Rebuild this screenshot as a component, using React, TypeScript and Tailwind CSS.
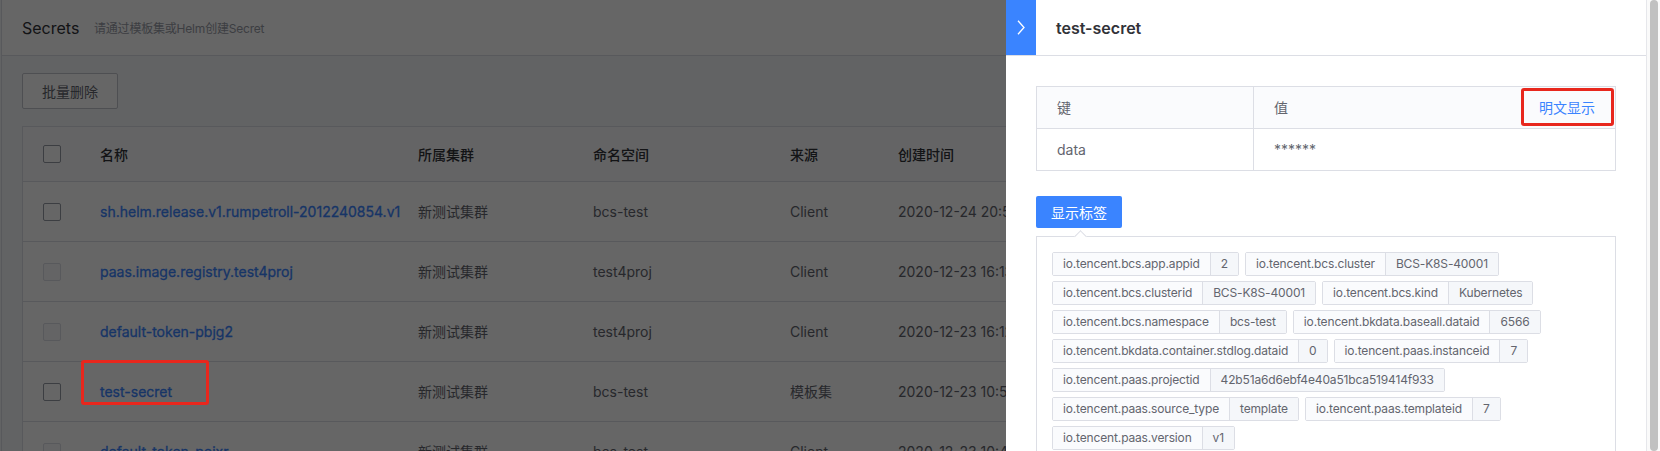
import React from "react";

type Row = {
  name: string;
  cluster: string;
  ns: string;
  src: string;
  time: string;
  disabled: boolean;
  mark?: boolean;
};

const rows: Row[] = [
  { name: "sh.helm.release.v1.rumpetroll-2012240854.v1", cluster: "新测试集群", ns: "bcs-test", src: "Client", time: "2020-12-24 20:54:18", disabled: false },
  { name: "paas.image.registry.test4proj", cluster: "新测试集群", ns: "test4proj", src: "Client", time: "2020-12-23 16:13:02", disabled: true },
  { name: "default-token-pbjg2", cluster: "新测试集群", ns: "test4proj", src: "Client", time: "2020-12-23 16:12:51", disabled: true },
  { name: "test-secret", cluster: "新测试集群", ns: "bcs-test", src: "模板集", time: "2020-12-23 10:55:37", disabled: false, mark: true },
  { name: "default-token-pojxr", cluster: "新测试集群", ns: "bcs-test", src: "Client", time: "2020-12-23 10:46:09", disabled: true },
];

const tagRows: [string, string][][] = [
  [["io.tencent.bcs.app.appid", "2"], ["io.tencent.bcs.cluster", "BCS-K8S-40001"]],
  [["io.tencent.bcs.clusterid", "BCS-K8S-40001"], ["io.tencent.bcs.kind", "Kubernetes"]],
  [["io.tencent.bcs.namespace", "bcs-test"], ["io.tencent.bkdata.baseall.dataid", "6566"]],
  [["io.tencent.bkdata.container.stdlog.dataid", "0"], ["io.tencent.paas.instanceid", "7"]],
  [["io.tencent.paas.projectid", "42b51a6d6ebf4e40a51bca519414f933"]],
  [["io.tencent.paas.source_type", "template"], ["io.tencent.paas.templateid", "7"]],
  [["io.tencent.paas.version", "v1"]],
];

function Checkbox({ disabled }: { disabled?: boolean }) {
  return (
    <span
      className={
        disabled
          ? "block w-[18px] h-[18px] rounded-[2px] border border-[#dcdee5] bg-[#fafbfd]"
          : "block w-[18px] h-[18px] rounded-[2px] border border-[#979ba5] bg-white"
      }
    />
  );
}

const gridCols = "grid grid-cols-[77px_318px_175px_197px_108px_1fr]";

export default function App() {
  return (
    <div className="relative w-[1660px] h-[451px] overflow-hidden bg-[#f5f7fa] font-[Inter,'Noto_Sans_CJK_SC',sans-serif]">
      {/* underlying page */}
      <div className="h-full pl-[1px]">
        <div className="h-full border-l border-[#dcdee5]">
          <div className="h-[56px] bg-white border-b border-[#dcdee5] flex items-center pl-[20px]">
            <span className="w-[72px] shrink-0 text-[16px] text-[#313238]">Secrets</span>
            <span className="text-[12px] text-[#979ba5] pt-[2px] tracking-[-0.2px]">请通过模板集或Helm创建Secret</span>
          </div>
          <div className="px-[20px] pt-[17px]">
            <button className="h-[36px] w-[96px] border border-[#c4c6cc] bg-white rounded-[2px] text-[14px] text-[#63656e]">
              批量删除
            </button>
            <div className="mt-[17px] bg-white border border-[#dcdee5]">
              <div className={`${gridCols} h-[54px] items-center bg-[#fafbfd] text-[14px] text-[#313238] font-medium`}>
                <div className="pl-[20px]">
                  <Checkbox />
                </div>
                <div>名称</div>
                <div>所属集群</div>
                <div>命名空间</div>
                <div>来源</div>
                <div>创建时间</div>
              </div>
              {rows.map((r) => (
                <div
                  key={r.name}
                  className={`${gridCols} h-[60px] items-center border-t border-[#dcdee5] text-[14px] text-[#63656e]`}
                >
                  <div className="pl-[20px]">
                    <Checkbox disabled={r.disabled} />
                  </div>
                  <div className="relative whitespace-nowrap">
                    <span className="text-[#3a84ff] [-webkit-text-stroke:0.3px_#3a84ff]">{r.name}</span>
                    {r.mark && (
                      <span className="absolute left-[-19px] top-[-21px] w-[128px] h-[45px] border-[3px] border-[#e8271d] rounded-[3px] z-30" />
                    )}
                  </div>
                  <div>{r.cluster}</div>
                  <div>{r.ns}</div>
                  <div>{r.src}</div>
                  <div className="whitespace-nowrap">{r.time}</div>
                </div>
              ))}
            </div>
          </div>
        </div>
      </div>

      {/* dim overlay */}
      <div className="absolute inset-0 bg-black/60 z-10" />

      {/* drawer */}
      <div className="absolute top-0 right-0 h-full w-[654px] bg-white z-20 flex">
        <div className="w-[641px] h-full border-r border-[#e6e7eb] flex flex-col">
          <div className="h-[56px] border-b border-[#dcdee5] flex items-center shrink-0">
            <div className="w-[30px] h-full bg-[#3a84ff] flex items-center justify-center">
              <svg width="8" height="15" viewBox="0 0 8 15" fill="none">
                <polyline points="1,0.8 7,7.5 1,14.2" stroke="white" strokeWidth="1.3" fill="none" />
              </svg>
            </div>
            <span className="ml-[20px] text-[16px] font-semibold text-[#313238]">test-secret</span>
          </div>
          <div className="px-[30px] pt-[30px]">
            <div className="border border-[#dcdee5] text-[14px] text-[#63656e]">
              <div className="grid grid-cols-[217px_1fr] h-[41px] bg-[#fafbfd]">
                <div className="flex items-center pl-[20px] border-r border-[#dcdee5]">键</div>
                <div className="relative flex items-center justify-between pl-[20px] pr-[20px]">
                  <span>值</span>
                  <span className="text-[#3a84ff]">明文显示</span>
                  <span className="absolute right-[1px] top-[1px] w-[93px] h-[38px] border-[3px] border-[#e8271d] rounded-[3px]" />
                </div>
              </div>
              <div className="grid grid-cols-[217px_1fr] h-[42px] border-t border-[#dcdee5]">
                <div className="flex items-center pl-[20px] border-r border-[#dcdee5]">data</div>
                <div className="flex items-center pl-[20px]">******</div>
              </div>
            </div>
            <button className="mt-[25px] w-[86px] h-[32px] rounded-[2px] bg-[#3a84ff] text-white text-[14px]">
              显示标签
            </button>
            <div className="relative mt-[8px] border border-[#dcdee5] px-[15px] pt-[15px] pb-[20px]">
              <span className="absolute -top-[5px] left-[39px] w-[9px] h-[9px] rotate-45 bg-white border-l border-t border-[#dcdee5]" />
              <div className="flex flex-col gap-[5px]">
                {tagRows.map((row, i) => (
                  <div key={i} className="flex gap-[6px]">
                    {row.map(([k, v]) => (
                      <div key={k} className="flex h-[24px] border border-[#dcdee5] rounded-[2px] text-[12px] text-[#63656e] whitespace-nowrap tracking-[-0.15px]">
                        <span className="flex items-center px-[10px] bg-[#fafbfd]">{k}</span>
                        <span className="flex items-center px-[10px] bg-[#f5f7fa] border-l border-[#dcdee5]">{v}</span>
                      </div>
                    ))}
                  </div>
                ))}
              </div>
            </div>
          </div>
        </div>
        <div className="flex-1 h-full bg-[#fafafa] pl-[3px]">
          <div className="w-[8px] h-full bg-[#c1c1c1] rounded-[4px]" />
        </div>
      </div>
    </div>
  );
}
